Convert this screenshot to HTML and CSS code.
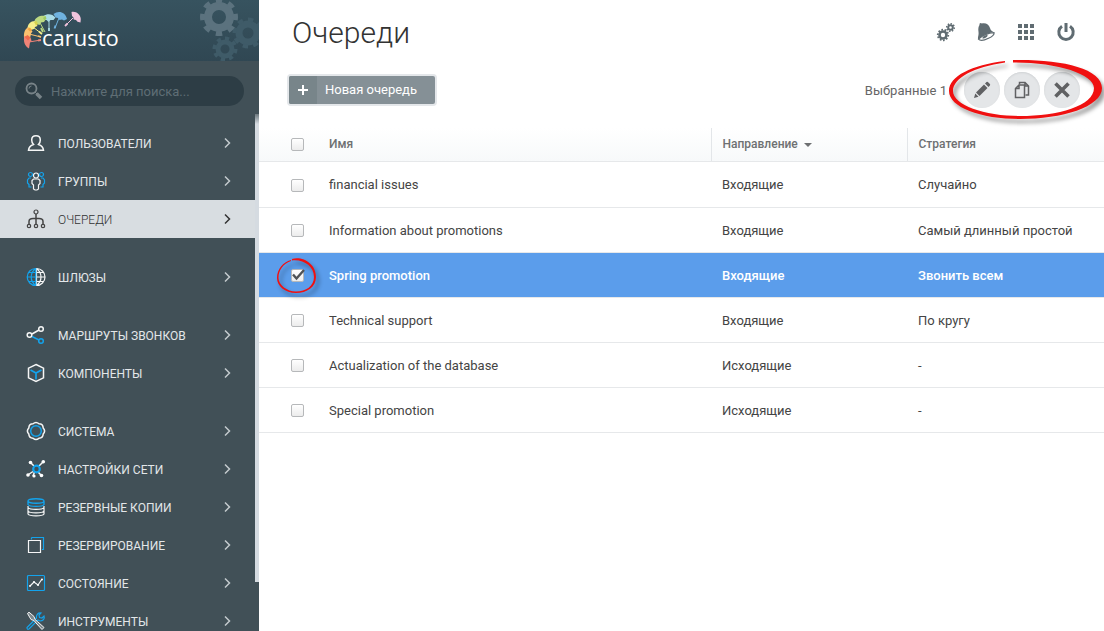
FILE: index.html
```
<!DOCTYPE html>
<html lang="ru">
<head>
<meta charset="utf-8">
<title>Очереди</title>
<link rel="stylesheet" href="styles.css">
</head>
<body>
<div class="app">
  <aside class="sidebar">
    <header class="brand">
      <a class="logo" href="#" aria-label="carusto">
        <svg width="110" height="46" viewBox="20 8 110 46">
          <g stroke-width="1" fill="none">
            <path stroke="#f0c3dc" d="M73 18L66 25"/><path stroke="#6fb2df" d="M59 18L55 28"/>
            <path stroke="#a9dbe6" d="M49 20L49 31"/><path stroke="#bcd982" d="M39 21L45 32"/>
            <path stroke="#f5ef8d" d="M33 27L42 34"/><path stroke="#fbc16f" d="M29 34L41 37"/>
            <path stroke="#f08377" d="M29 42L41 40"/>
          </g>
          <g stroke-width="1.8">
            <path stroke="#f0c3dc" d="M65 26l2.500-2.500"/><path stroke="#6fb2df" d="M54.500 28.500l1-3"/>
            <path stroke="#a9dbe6" d="M49 31v-3"/><path stroke="#bcd982" d="M43 32l-2-4"/>
            <path stroke="#f5ef8d" d="M42 34l-3-2.500"/><path stroke="#fbc16f" d="M41 37l-3-1"/>
            <path stroke="#f08377" d="M41 40l-3 .5"/>
          </g>
          <path fill="#f0c3dc" d="M71.500 12c5-1 9 3 9.300 7l-.3 3.500-3-.8-1.500-1.700-2.300-.5-.2-2-1.500-1.500z"/>
          <path fill="#a9dbe6" d="M43.500 16c4-3 9-2 12 1.500l-2 2.500-3 0-2 2-2-2-3 0z"/>
          <path fill="#6fb2df" d="M53.500 14c5-4 12-2 13.500 5l-3 1.500-2-1-2.500.5-1.500-2-2.500-.5z"/>
          <path fill="#f5ef8d" d="M27.500 29c0-5 3-8 7.500-8l2.500 5-2.500 1-1 2-3 1z"/>
          <path fill="#bcd982" d="M34.500 21c1-4 6-6 11-5l.5 3-2 3-3 .5-1.500 2.500-3-1z"/>
          <path fill="#fbc16f" d="M24 38c-.5-6 1-9 4.500-11l4 4.500-1.500 2-.5 3-2.500 2z"/>
          <path fill="#f08377" d="M29 48.500c-4.500-2-6-8-4.500-12.500l6 1.500 1 3-1.500 2z"/>
          <path fill="#ef6b4a" d="M24.500 37l3-2 3 2.500-2.500 3z"/>
          <path fill="#9dc964" d="M43 18l2.500-2 1 2.500-2 2z"/><path fill="#d6d34e" d="M34 22l2.500-1 1.500 3-2 1.500z"/>
          <path fill="#f0a33c" d="M27.500 29l2.500-1.500 2 2.500-2 1.500z"/>
          <text class="logo-text" x="42" y="46">carusto</text>
        </svg>
      </a>
      <svg class="brand-gears" width="64" height="61" viewBox="195 0 64 61" fill="none">
        <g stroke="#3f5b68">
          <circle cx="248" cy="33" r="9" stroke-width="7"/>
          <circle cx="248" cy="33" r="13.500" stroke-width="4" pathLength="16" stroke-dasharray="1 1"/>
          <circle cx="225" cy="49" r="7" stroke-width="5"/>
          <circle cx="225" cy="49" r="10.500" stroke-width="4" pathLength="16" stroke-dasharray="1 1"/>
        </g>
        <g stroke="#5b727e">
          <circle cx="219" cy="17" r="11" stroke-width="8"/>
          <circle cx="219" cy="17" r="16.500" stroke-width="5" pathLength="16" stroke-dasharray="1 1" stroke-dashoffset=".5"/>
        </g>
      </svg>
    </header>

    <label class="search">
      <svg width="18" height="18" viewBox="0 0 18 18" fill="none" stroke="#788388">
        <circle cx="6.500" cy="6.500" r="5" stroke-width="1.800"/><path d="M4 6.500A2.500 2.500 0 0 1 6.500 4M10 10l2 2"/><path stroke-width="3.500" d="M11.500 11.500l4.500 4.500"/>
      </svg>
      <input type="search" placeholder="Нажмите для поиска..." aria-label="Поиск">
    </label>

    <nav class="nav">
      <div class="nav-group">
        <a class="nav-item" href="#">
          <svg class="icon" viewBox="0 0 20 20"><path stroke-width="1.500" d="M10 2.700c3 0 4.300 2 4.300 4.200 0 2-.8 3.500-1.800 4.600 2.500.8 4.700 2.200 5 5.800H2.500c.3-3.600 2.500-5 5-5.800-1-1.100-1.800-2.600-1.800-4.600 0-2.200 1.300-4.200 4.300-4.200z"/></svg>
          <span>ПОЛЬЗОВАТЕЛИ</span><svg class="chevron" viewBox="0 0 7 12"><path d="M1 1.500L5.500 6 1 10.500"/></svg></a>
        <a class="nav-item" href="#">
          <svg class="icon" viewBox="0 0 20 20"><g class="accent"><circle cx="4.500" cy="3.500" r="2"/><circle cx="15.500" cy="3.500" r="2"/><path d="M5 7H3L1.500 9v3L3 13.500V16h2.500M15 7h2l1.500 2v3L17 13.500V16h-2.500"/></g><circle cx="10" cy="4.500" r="2.500"/><path d="M7.500 8h5L14 9.500v3L12.500 14v4L11 19H9l-1.500-1v-4L6 12.500v-3z"/></svg>
          <span>ГРУППЫ</span><svg class="chevron" viewBox="0 0 7 12"><path d="M1 1.500L5.500 6 1 10.500"/></svg></a>
        <a class="nav-item active" href="#" aria-current="page">
          <svg class="icon" viewBox="0 0 20 20"><circle cx="10" cy="3" r="2"/><circle cx="3" cy="17" r="1.700"/><circle cx="10" cy="17" r="1.700"/><circle cx="17" cy="17" r="1.700"/><path stroke-width="1.500" d="M10 5v10M3 15v-2.500q0-3 4-3h6q4 0 4 3V15"/></svg>
          <span>ОЧЕРЕДИ</span><svg class="chevron" viewBox="0 0 7 12"><path d="M1 1.500L5.500 6 1 10.500"/></svg></a>
      </div>
      <div class="nav-group">
        <a class="nav-item" href="#">
          <svg class="icon" viewBox="0 0 20 20"><path d="M10.500 1.500a8.500 8.500 0 0 1 0 17zM10.500 1.500c6 4.500 6 12.500 0 17M10.500 10H19M10.500 5.500H17M10.500 14.500H17"/><path class="accent" d="M9.700 1.500a8.500 8.500 0 0 0 0 17zM9.700 1.500c-6 4.500-6 12.500 0 17M1.500 10h8M3 5.500h7M3 14.500h7"/></svg>
          <span>ШЛЮЗЫ</span><svg class="chevron" viewBox="0 0 7 12"><path d="M1 1.500L5.500 6 1 10.500"/></svg></a>
      </div>
      <div class="nav-group">
        <a class="nav-item" href="#">
          <svg class="icon" viewBox="0 0 20 20"><g stroke-width="1.500"><g class="accent"><path d="M6 11.500l7 3.500"/><circle cx="15" cy="16" r="2.300"/></g><circle cx="3.500" cy="10" r="2.300"/><circle cx="15" cy="4" r="2.300"/><path d="M6 9l7-4"/></g></svg>
          <span>МАРШРУТЫ ЗВОНКОВ</span><svg class="chevron" viewBox="0 0 7 12"><path d="M1 1.500L5.500 6 1 10.500"/></svg></a>
        <a class="nav-item" href="#">
          <svg class="icon" viewBox="0 0 20 20"><path class="accent" stroke-width="1.700" d="M4.500 7L10 10l5.500-3M10 10v6.500"/><path stroke-width="1.500" d="M10 1.500l7.500 3.700v9.600L10 18.500l-7.500-3.700V5.200z"/></svg>
          <span>КОМПОНЕНТЫ</span><svg class="chevron" viewBox="0 0 7 12"><path d="M1 1.500L5.500 6 1 10.500"/></svg></a>
      </div>
      <div class="nav-group">
        <a class="nav-item" href="#">
          <svg class="icon" viewBox="0 0 20 20"><circle class="accent" cx="10" cy="10" r="5.300" stroke-width="1.500"/><path stroke-width="1.500" d="M7 2.800Q10 .2 13 2.800 17 2.800 17.200 7 20 10 17.200 13 17 17.200 13 17.200 10 19.800 7 17.200 3 17.200 2.800 13 0 10 2.800 7 3 2.800 7 2.800z"/></svg>
          <span>СИСТЕМА</span><svg class="chevron" viewBox="0 0 7 12"><path d="M1 1.500L5.500 6 1 10.500"/></svg></a>
        <a class="nav-item" href="#">
          <svg class="icon" viewBox="0 0 20 20"><path stroke-width="1.500" d="M5 4l3 3M17 3l-4 4M2.500 15.500L7 12.500M7 17l1.500-4M15 16l-3-3"/><g class="dots"><circle cx="4.500" cy="3.500" r="1.800"/><circle cx="17.300" cy="2.800" r="1.800"/><circle cx="2" cy="16" r="1.800"/><circle cx="8" cy="17" r="1.600"/><circle cx="15.500" cy="16.500" r="1.800"/></g><circle class="accent" cx="10.500" cy="10" r="3.300" stroke-width="2.200"/></svg>
          <span>НАСТРОЙКИ СЕТИ</span><svg class="chevron" viewBox="0 0 7 12"><path d="M1 1.500L5.500 6 1 10.500"/></svg></a>
        <a class="nav-item" href="#">
          <svg class="icon" viewBox="0 0 20 20"><path d="M2 9v1.500c1.500 2.500 14.500 2.500 16 0V9M2 11v3c1.500 2.500 14.500 2.500 16 0v-3M2 14v3c1.500 2.500 14.500 2.500 16 0v-3"/><path class="accent" stroke-width="1.400" d="M2 4c0-3 16-3 16 0s-16 3-16 0v3.500c1.500 2.500 14.500 2.500 16 0V4"/></svg>
          <span>РЕЗЕРВНЫЕ КОПИИ</span><svg class="chevron" viewBox="0 0 7 12"><path d="M1 1.500L5.500 6 1 10.500"/></svg></a>
        <a class="nav-item" href="#">
          <svg class="icon" viewBox="0 0 20 20"><path class="accent" d="M5.500 2.500h12v12h-1.500M5.500 2.500v2"/><path d="M2.500 5.500h12v12h-12z"/></svg>
          <span>РЕЗЕРВИРОВАНИЕ</span><svg class="chevron" viewBox="0 0 7 12"><path d="M1 1.500L5.500 6 1 10.500"/></svg></a>
        <a class="nav-item" href="#">
          <svg class="icon" viewBox="0 0 20 20"><rect class="accent" x="1.500" y="2.500" width="17" height="15" rx="1"/><path d="M4 13l4-4 4 3 4-6"/><g class="dots"><circle cx="4" cy="13" r=".9"/><circle cx="8" cy="9" r="1"/><circle cx="12" cy="12" r="1"/><circle cx="16" cy="6.500" r="1"/></g></svg>
          <span>СОСТОЯНИЕ</span><svg class="chevron" viewBox="0 0 7 12"><path d="M1 1.500L5.500 6 1 10.500"/></svg></a>
        <a class="nav-item" href="#">
          <svg class="icon" viewBox="0 0 20 20"><path class="accent" d="M12 9L3 18q-2 1-2-1.500L10.500 7C10 4 12 1.500 15 2l-2 2 .5 2.500L16 7l2-2c1 3-1 5-4 5z"/><path fill="#7d888d" stroke-width="1" d="M1.500 2.500L3 1.200l5 4.300 1 3 2.500 2 6.500 6-2 2-6-6.500-2-2.500-3-1z"/></svg>
          <span>ИНСТРУМЕНТЫ</span><svg class="chevron" viewBox="0 0 7 12"><path d="M1 1.500L5.500 6 1 10.500"/></svg></a>
      </div>
    </nav>
    <div class="scroll-thumb"></div>
  </aside>

  <main class="main">
    <header class="page-head">
      <h1>Очереди</h1>
      <div class="tools">
        <button type="button" aria-label="Настройки"><svg width="20" height="20" viewBox="0 0 20 20" fill="none" stroke="#606c72"><circle cx="7" cy="13" r="3.500" stroke-width="2.600"/><circle cx="7" cy="13" r="5.300" stroke-width="1.700" pathLength="20" stroke-dasharray="1 1"/><circle cx="14.500" cy="5.500" r="2.300" stroke-width="2"/><circle cx="14.500" cy="5.500" r="3.800" stroke-width="1.500" pathLength="16" stroke-dasharray="1 1"/></svg></button>
        <button type="button" aria-label="Уведомления"><svg width="20" height="20" viewBox="0 0 20 20"><path fill="#606c72" d="M3.500 1.800q1-1.300 2.300-.4c4-1 7 .8 8.200 4.600.6 2.200 1.800 3 3.500 4C15 10.500 7 13 2.300 17.500c-1-2 .7-4 .2-7.500C2 6.500 2.500 4.500 3.500 3z"/><path fill="#fff" stroke="#606c72" stroke-width="1.200" d="M2.500 17.200C5 14 13 10.500 18 10.600c.5 2-2 4-5.500 5.700-4 2-8.500 2.700-10 .9z"/><path fill="#606c72" d="M6.500 16.500c-.3-2 2.500-3.500 5-3.500.5 1.500-2 3.500-5 3.500z"/></svg></button>
        <button type="button" aria-label="Приложения"><svg width="20" height="20" viewBox="0 0 20 20" fill="#606c72"><path d="M2 2h4v4H2zM8 2h4v4H8zM14 2h4v4h-4zM2 8h4v4H2zM8 8h4v4H8zM14 8h4v4h-4zM2 14h4v4H2zM8 14h4v4H8zM14 14h4v4h-4z"/></svg></button>
        <button type="button" aria-label="Выход"><svg width="20" height="20" viewBox="0 0 20 20" fill="none" stroke="#606c72" stroke-width="3"><path d="M6 4.200a7.200 7.200 0 1 0 8 0M10 1v9"/></svg></button>
      </div>
    </header>

    <div class="toolbar">
      <button type="button" class="new-btn"><span class="plus"><svg width="10" height="10" viewBox="0 0 10 10" stroke="#fff" stroke-width="2"><path d="M5 0v10M0 5h10"/></svg></span><span class="new-label">Новая очередь</span></button>
      <div class="selection">
        <span class="selected-count">Выбранные 1</span>
        <button type="button" class="round" aria-label="Изменить"><svg width="18" height="18" viewBox="0 0 18 18" fill="#606163"><path d="M1 17l1.300-4.500 3.200 3.200zM3 11.500L11 3.500l3.500 3.500-8 8zM12 2.600l1.500-1.500q.7-.6 1.400 0l2 2q.6.700 0 1.400L15.500 6z"/></svg></button>
        <button type="button" class="round" aria-label="Копировать"><svg width="18" height="18" viewBox="0 0 18 18" fill="none" stroke="#606163" stroke-width="1.500"><path d="M6.500 3.500V1.500H12L15.500 5v9h-3M12 1.500V5h3.500"/><path fill="#e4e6e8" d="M2.500 7.500l3.500-3.500h5.500v12.500h-9zM6 4.500v3H3"/></svg></button>
        <button type="button" class="round" aria-label="Удалить"><svg width="18" height="18" viewBox="0 0 18 18" stroke="#606163" stroke-width="3.600"><path d="M2.500 2.500l13 13M15.500 2.500l-13 13"/></svg></button>
        <svg class="mark-actions" width="164" height="80" viewBox="940 50 164 80"><path fill="#f01010" d="M1013 60C1060 59 1102 68 1102 88 1102 107 1062 119 1020 119 980 119 949 107 949 91 949 76 972 65 1005 61V62.500C974 67 953 78 953 91 953 105 984 116 1020 116 1058 116 1094 106 1094 88 1094 74 1056 62 1013 62.500z"/></svg>
      </div>
    </div>

    <table class="queues">
      <colgroup><col class="col-check"><col><col class="col-dir"><col class="col-strategy"></colgroup>
      <thead>
        <tr><th><input type="checkbox" aria-label="Выбрать все"></th><th>Имя</th><th class="divided">Направление <span class="sort"></span></th><th class="divided">Стратегия</th></tr>
      </thead>
      <tbody>
        <tr><td><input type="checkbox" aria-label="financial issues"></td><td>financial issues</td><td>Входящие</td><td>Случайно</td></tr>
        <tr><td><input type="checkbox" aria-label="Information about promotions"></td><td>Information about promotions</td><td>Входящие</td><td>Самый длинный простой</td></tr>
        <tr class="selected"><td><div class="check-wrap"><input type="checkbox" checked aria-label="Spring promotion">
          <svg class="tick" width="15" height="13" viewBox="0 0 15 13"><path fill="none" stroke="#505356" stroke-width="2.400" d="M2 6.500l3.500 4L13 2"/></svg>
          <svg class="mark-check" width="52" height="52" viewBox="0 0 52 52"><path fill="#f01010" d="M21 8C32 5 45 13 45 26 45 36 36 42 25 42 14 42 6 35 6 27 6 18 12 11 20 9V10C12 13 7.500 19 7.500 27 7.500 34 16 40.500 25 40.500 35 40.500 43 35 43 26 43 15 32 8 21 9.500z"/></svg></div></td><td>Spring promotion</td><td>Входящие</td><td>Звонить всем</td></tr>
        <tr><td><input type="checkbox" aria-label="Technical support"></td><td>Technical support</td><td>Входящие</td><td>По кругу</td></tr>
        <tr><td><input type="checkbox" aria-label="Actualization of the database"></td><td>Actualization of the database</td><td>Исходящие</td><td>-</td></tr>
        <tr><td><input type="checkbox" aria-label="Special promotion"></td><td>Special promotion</td><td>Исходящие</td><td>-</td></tr>
      </tbody>
    </table>
  </main>
</div>
</body>
</html>
```
FILE: styles.css
```
* { box-sizing: border-box; }
body { margin: 0; font: 13px/20px Roboto, "Liberation Sans", sans-serif; color: #444; background: #fff; }
button { border: 0; padding: 0; background: none; font: inherit; cursor: pointer; }
a { color: inherit; text-decoration: none; }
svg { display: block; flex: none; }

.app { display: flex; height: 100vh; overflow: hidden; }

.sidebar { position: relative; flex: none; width: 259px; overflow: hidden; background: #415057; color: #e3e7e9; }
.brand { position: relative; height: 61px; padding: 8px 20px; background: linear-gradient(#37535f, #304753); }
.brand-gears { position: absolute; top: 0; right: 0; }
.logo { display: block; width: 110px; }
.logo-text { font: 22px "Open Sans", "Noto Sans", sans-serif; fill: #fff; }

.search { display: flex; align-items: center; gap: 8px; height: 30px; margin: 15px 15px 18px; padding: 0 10px; border-radius: 15px; background: #2d3d45; }
.search input { flex: 1; min-width: 0; border: 0; padding: 2px 0 0; background: none; outline: 0; color: #e3e7e9; font: inherit; }
.search input::placeholder { color: #5f6e75; opacity: 1; }

.nav { display: flex; flex-direction: column; gap: 20px; }
.nav-item { display: flex; align-items: center; gap: 12px; height: 38px; padding: 0 28px 0 26px; font-size: 12px; }
.nav-item span { flex: 1; padding-top: 2px; }
.nav-item.active { margin-right: 4px; padding-right: 24px; background: #d8dde1; color: #333; font-weight: 300; }
.icon { width: 20px; height: 20px; fill: none; stroke: #f5f6f6; stroke-width: 1.200; }
.active .icon { stroke: #444; }
.accent { stroke: #13a3ec; }
.dots { fill: #fff; stroke: none; }
.chevron { width: 7px; height: 12px; fill: none; stroke: #c3cacd; stroke-width: 1.500; }
.active .chevron { stroke: #333; }
.scroll-thumb { position: absolute; top: 114px; right: 0; width: 4px; height: 468px; background: linear-gradient(#6b777d, #d5dbe1 10px); }

.main { flex: 1; min-width: 0; }
.page-head { display: flex; justify-content: space-between; align-items: center; height: 64px; padding: 0 28px 0 33px; }
h1 { margin: 0; padding-top: 2px; font-size: 30px; line-height: 40px; font-weight: 300; color: #333; }
.tools { display: flex; gap: 20px; }

.toolbar { display: flex; justify-content: space-between; align-items: center; height: 52px; padding: 0 24px 0 28px; }
.new-btn { display: flex; align-items: stretch; height: 32px; border: 2px solid #e4e7ea; border-radius: 4px; background: #859096; color: #fff; overflow: hidden; }
.plus { display: flex; align-items: center; justify-content: center; width: 28px; background: #78858a; }
.new-label { padding: 0 18px 0 8px; line-height: 27px; }
.selection { position: relative; display: flex; align-items: center; gap: 4px; color: #666; }
.selected-count { margin-right: 13px; padding-top: 2px; }
.round { display: flex; align-items: center; justify-content: center; width: 36px; height: 36px; border-radius: 50%; background: #e4e6e8; box-shadow: inset 0 1px 2px #cfd2d4; }
.mark-actions { position: absolute; right: -24px; top: -22px; pointer-events: none; filter: drop-shadow(3px 4px 2px rgba(0, 0, 0, .4)); }

.queues { width: 100%; margin-top: 12px; border-collapse: collapse; table-layout: fixed; color: #444; }
.col-check { width: 70px; }
.col-dir { width: 196px; }
.col-strategy { width: 197px; }
th, td { padding: 0; text-align: left; border-bottom: 1px solid #e6e8ea; white-space: nowrap; }
th { height: 33px; font-size: 12px; font-weight: 500; color: #6e7072; }
td { height: 45px; padding-top: 2px; }
tbody tr:first-child td { height: 46px; }
thead { background: linear-gradient(#fff, #f7f9fa); }
.queues th:first-child, .queues td:first-child { padding-left: 32px; }
.queues th:nth-child(n+3), .queues td:nth-child(n+3) { padding-left: 11px; }
.divided { border-left: 1px solid #e3e6e9; }
.selected { background: #5b9deb; color: #fff; font-weight: 500; }
.sort { display: inline-block; margin-left: 3px; vertical-align: middle; border: 4px solid transparent; border-top-color: #6e7072; border-bottom: 0; }
input[type="checkbox"] { display: block; appearance: none; width: 13px; height: 13px; margin: 0; border: 1px solid #b6b8ba; border-radius: 2px; background: linear-gradient(#fff, #ececec); }
.check-wrap { position: relative; width: 13px; }
.tick { position: absolute; left: 0; top: -1px; pointer-events: none; }
.mark-check { position: absolute; left: -20px; top: -18px; pointer-events: none; filter: drop-shadow(3px 4px 2px rgba(0, 0, 0, .4)); }
```
